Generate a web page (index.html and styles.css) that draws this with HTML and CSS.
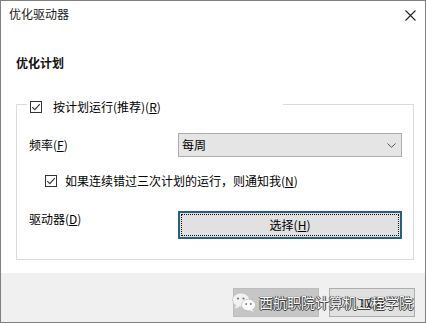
FILE: index.html
```html
<!DOCTYPE html>
<html lang="zh-CN">
<head>
<meta charset="utf-8">
<title>优化驱动器</title>
<link rel="stylesheet" href="styles.css">
</head>
<body>
<div class="window">
  <div class="titlebar">
    <span class="title">优化驱动器</span>
    <svg class="close" width="11" height="11" viewBox="0 0 11 11"><path d="M0.5 0.5 L10.5 10.5 M10.5 0.5 L0.5 10.5" stroke="#222" stroke-width="1.1" fill="none"/></svg>
  </div>
  <div class="content">
    <div class="heading">优化计划</div>
    <div class="group">
      <div class="legend">
        <svg class="cb" width="12" height="12" viewBox="0 0 12 12"><rect x="0.5" y="0.5" width="11" height="11" fill="#fff" stroke="#333"/><path d="M2.3 6.2 L4.8 8.7 L9.8 3.2" stroke="#333" stroke-width="1.1" fill="none"/></svg>
        <span>按计划运行(推荐)(<u>R</u>)</span>
      </div>
      <div class="row freq">
        <span class="label">频率(<u>F</u>)</span>
        <div class="select">
          <span>每周</span>
          <svg class="chev" width="9" height="5" viewBox="0 0 9 5"><path d="M0.5 0.5 L4.5 4.3 L8.5 0.5" stroke="#555" stroke-width="1" fill="none"/></svg>
        </div>
      </div>
      <div class="row notify">
        <svg class="cb" width="12" height="12" viewBox="0 0 12 12"><rect x="0.5" y="0.5" width="11" height="11" fill="#fff" stroke="#333"/><path d="M2.3 6.2 L4.8 8.7 L9.8 3.2" stroke="#333" stroke-width="1.1" fill="none"/></svg>
        <span>如果连续错过三次计划的运行，则通知我(<u>N</u>)</span>
      </div>
      <div class="row drive">
        <span class="label">驱动器(<u>D</u>)</span>
        <button class="btn-select">选择(<u>H</u>)</button>
      </div>
    </div>
  </div>
  <div class="footer">
    <button class="btn ok">确定</button>
    <button class="btn">取消</button>
    <div class="watermark">
      <svg width="24" height="20" viewBox="0 0 24 20">
        <ellipse cx="9" cy="8" rx="8.5" ry="7" fill="#f2f2f2" stroke="#bbb" stroke-width="0.6"/>
        <path d="M4 13 L3 17 L7.5 14.5 Z" fill="#f2f2f2"/>
        <circle cx="6" cy="6.5" r="1.1" fill="#777"/>
        <circle cx="11.5" cy="6.5" r="1.1" fill="#777"/>
        <ellipse cx="16.5" cy="13" rx="7" ry="5.8" fill="#fafafa" stroke="#bbb" stroke-width="0.6"/>
        <path d="M20 17 L21.5 19.8 L17.5 18 Z" fill="#fafafa"/>
        <circle cx="14.2" cy="12" r="0.9" fill="#777"/>
        <circle cx="18.8" cy="12" r="0.9" fill="#777"/>
      </svg>
      <span class="wm-text">西航职院计算机工程学院</span>
    </div>
  </div>
</div>
</body>
</html>
```

FILE: styles.css
```css
html, body {
  margin: 0;
  padding: 0;
  background: #fff;
}

body {
  font-family: "Noto Sans CJK SC", "Noto Sans", sans-serif;
  font-size: 12px;
  color: #000;
}

u {
  text-decoration: underline;
  text-underline-offset: 1px;
}

.window {
  width: 426px;
  height: 323px;
  box-sizing: border-box;
  border: 1px solid #808080;
  background: #fff;
  display: flex;
  flex-direction: column;
}

.titlebar {
  height: 26px;
  flex: none;
  display: flex;
  align-items: center;
  justify-content: space-between;
  padding: 0 9px 0 8px;
}

.title {
  line-height: 16px;
  color: #1a1a1a;
}

.close {
  display: block;
  margin-top: 2px;
}

.content {
  flex: 1;
  padding: 0 11px 0 15px;
}

.heading {
  font-weight: bold;
  line-height: 16px;
  margin-top: 28px;
  color: #111;
}

.group {
  margin-top: 33px;
  border: 1px solid #dcdcdc;
  padding: 0 11px 20px 12px;
}

.legend {
  box-sizing: border-box;
  width: 256px;
  margin: -6px 0 0 -2px;
  padding-left: 3px;
  height: 16px;
  line-height: 16px;
  background: #fff;
  display: flex;
  align-items: center;
  gap: 11px;
}

.cb {
  display: block;
  flex: none;
}

.row {
  line-height: 16px;
}

.freq {
  margin-top: 18px;
  display: grid;
  grid-template-columns: 149px 1fr;
  align-items: center;
}

.select {
  height: 24px;
  box-sizing: border-box;
  border: 1px solid #adadad;
  background: #e5e5e5;
  display: flex;
  align-items: center;
  justify-content: space-between;
  padding: 0 5px 0 3px;
}

.notify {
  margin-top: 16px;
  display: flex;
  align-items: center;
  gap: 8px;
  padding-left: 16px;
}

.drive {
  margin-top: 22px;
  display: grid;
  grid-template-columns: 149px 1fr;
  align-items: start;
}

.btn-select {
  position: relative;
  height: 28px;
  box-sizing: border-box;
  border: 2px solid #2b5f80;
  background: #e1e1e1;
  font: inherit;
  line-height: 16px;
  color: #000;
  padding: 0;
}

.btn-select::after {
  content: "";
  position: absolute;
  inset: 1px;
  border: 1px dotted #111;
}

.footer {
  position: relative;
  height: 49px;
  flex: none;
  box-sizing: border-box;
  background: #f0f0f0;
  display: flex;
  justify-content: flex-end;
  align-items: flex-start;
  gap: 10px;
  padding: 15px 10px 0 0;
}

.btn {
  width: 86px;
  height: 29px;
  box-sizing: border-box;
  border: 1px solid #adadad;
  background: #e1e1e1;
  font: inherit;
  line-height: 16px;
  color: #000;
  padding: 0;
}

.btn.ok {
  background: #c6c6c6;
  border-color: #bdbdbd;
  color: #7a7a7a;
}

.watermark {
  position: absolute;
  left: 231px;
  top: 19px;
  height: 20px;
  display: flex;
  align-items: center;
  gap: 3px;
}

.wm-text {
  font-size: 14px;
  line-height: 18px;
  letter-spacing: 0;
  color: #f7f7f7;
  text-shadow: 0 0 1px #222, 1px 0 0 #444, -1px 0 0 #666, 0 1px 0 #444;
}
```
